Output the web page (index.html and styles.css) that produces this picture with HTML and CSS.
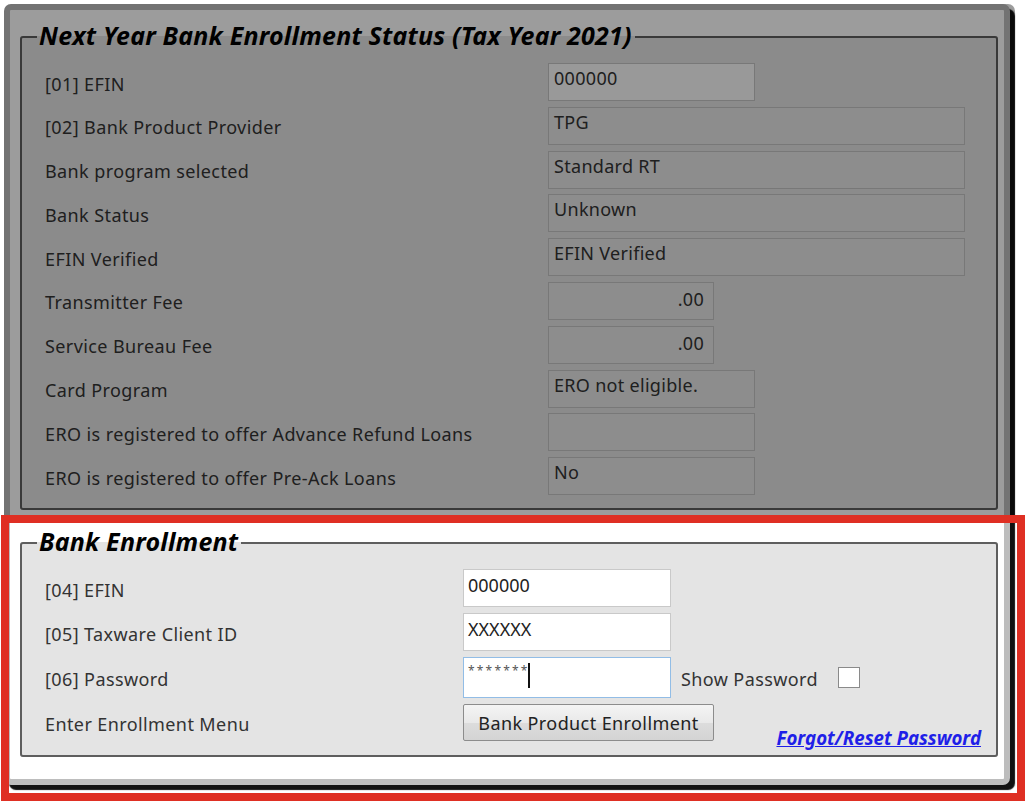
FILE: index.html
```html
<!DOCTYPE html>
<html lang="en">
<head>
    <meta charset="UTF-8">
    <title>Bank Enrollment</title>
    <link rel="stylesheet" href="styles.css">
</head>
<body>

    <div class="window">
        <!-- dimmed part of the dialog -->
        <div class="dim"></div>

        <fieldset class="group status">
            <legend>Next Year Bank Enrollment Status (Tax Year 2021)</legend>
            <div class="grid">
                <div class="label">[01] EFIN</div>
                <div class="box w-md light">000000</div>

                <div class="label">[02] Bank Product Provider</div>
                <div class="box w-lg">TPG</div>

                <div class="label">Bank program selected</div>
                <div class="box w-lg">Standard RT</div>

                <div class="label">Bank Status</div>
                <div class="box w-lg">Unknown</div>

                <div class="label">EFIN Verified</div>
                <div class="box w-lg">EFIN Verified</div>

                <div class="label">Transmitter Fee</div>
                <div class="box w-sm num">.00</div>

                <div class="label">Service Bureau Fee</div>
                <div class="box w-sm num">.00</div>

                <div class="label">Card Program</div>
                <div class="box w-md">ERO not eligible.</div>

                <div class="label">ERO is registered to offer Advance Refund Loans</div>
                <div class="box w-md"></div>

                <div class="label">ERO is registered to offer Pre-Ack Loans</div>
                <div class="box w-md">No</div>
            </div>
        </fieldset>

        <fieldset class="group enroll">
            <legend>Bank Enrollment</legend>
            <div class="row">
                <div class="label">[04] EFIN</div>
                <div class="field">000000</div>
            </div>
            <div class="row">
                <div class="label">[05] Taxware Client ID</div>
                <div class="field">XXXXXX</div>
            </div>
            <div class="row">
                <div class="label">[06] Password</div>
                <div class="field focus"><span class="stars">*******</span><span class="caret"></span></div>
                <div class="show-label">Show Password</div>
                <span class="check"></span>
            </div>
            <div class="row">
                <div class="label">Enter Enrollment Menu</div>
                <button class="btn">Bank Product Enrollment</button>
                <a href="#" class="reset">Forgot/Reset Password</a>
            </div>
        </fieldset>
    </div>

    <!-- highlight box -->
    <div class="highlight"></div>

</body>
</html>
```

FILE: styles.css
```css
html, body {
    margin: 0;
    padding: 0;
    width: 1030px;
    height: 801px;
    overflow: hidden;
    background: #ffffff;
    font-family: "Noto Sans", "Liberation Sans", sans-serif;
    color: #333;
}
.window {
    position: relative;
    box-sizing: border-box;
    margin: 4px 0 0 4px;
    width: 1006px;
    height: 781px;
    padding: 0 6px 0 10px;
    background: #fff;
    border: 6px solid #bdbdbd;
    border-radius: 7px;
    box-shadow: 5px 5px 1px #111;
}
.dim {
    position: absolute;
    top: -6px;
    left: -6px;
    right: -11px;
    height: 511px;
    background: rgba(0, 0, 0, 0.39);
    border-radius: 7px 7px 0 0;
    z-index: 5;
}
.group {
    margin: 0;
    border: 2px solid #5e5e5e;
    border-radius: 3px;
    background: #e4e4e4;
    padding: 0 15px 0 23px;
}
.group legend {
    margin-left: -8px;
    padding: 0 3px 4px 2px;
    font-size: 25px;
    line-height: 30px;
    letter-spacing: 0.2px;
    font-weight: bold;
    font-style: italic;
    color: #000;
}
.status {
    margin-top: 10px;
    padding-top: 9px;
    padding-bottom: 13px;
}
.grid {
    display: grid;
    grid-template-columns: 503px auto;
    grid-auto-rows: 38px;
    row-gap: 5.8px;
    align-items: center;
}
.label {
    font-size: 18px;
    letter-spacing: 0.4px;
    padding-top: 3px;
}
.box {
    box-sizing: border-box;
    height: 38px;
    padding: 2px 5px;
    font-size: 18px;
    letter-spacing: 0.3px;
    line-height: 24px;
    background: #e6e6e6;
    border: 1px solid #c4c4c4;
}
.box.light {
    background: #fafafa;
}
.box.num {
    text-align: right;
    padding-right: 9px;
    padding-top: 4px;
}
.w-sm { width: 166px; }
.w-md { width: 207px; }
.w-lg { width: 417px; }

.enroll {
    margin-top: 16px;
    padding-top: 9px;
    padding-bottom: 14px;
}
.row {
    display: flex;
    align-items: center;
    margin-bottom: 6px;
}
.row:last-child {
    margin-bottom: 0;
}
.row .label {
    width: 418px;
    flex: none;
}
.field {
    box-sizing: border-box;
    width: 208px;
    height: 38px;
    padding: 3px 4px;
    font-size: 18px;
    line-height: 24px;
    background: #fff;
    border: 1.5px solid #c9c9c9;
    color: #222;
}
.field.focus {
    height: 41px;
    border-color: #92bde6;
    display: flex;
    align-items: flex-start;
}
.stars {
    font-size: 12px;
    line-height: 16px;
    letter-spacing: 2.2px;
    color: #555;
    padding-top: 2px;
    margin-right: -2px;
}
.caret {
    display: inline-block;
    width: 2px;
    height: 25px;
    margin-top: 2px;
    background: #111;
}
.show-label {
    margin-left: 10px;
    width: 157px;
    font-size: 18px;
    letter-spacing: 0.4px;
    padding-top: 3px;
}
.check {
    width: 20px;
    height: 19px;
    background: #fff;
    border: 1px solid #8a8a8a;
}
.btn {
    box-sizing: border-box;
    width: 251px;
    height: 37px;
    font-family: "Noto Sans", "Liberation Sans", sans-serif;
    font-size: 18px;
    letter-spacing: 0.4px;
    color: #222;
    border: 1px solid #8c8c8c;
    border-radius: 2px;
    background: linear-gradient(#f4f4f4, #e9e9e9 50%, #dcdcdc 51%, #d4d4d4);
}
.reset {
    margin-left: auto;
    align-self: flex-end;
    margin-bottom: -9px;
    font-size: 18.7px;
    font-weight: bold;
    font-style: italic;
    color: #1f1fe8;
    text-decoration: underline;
}
.highlight {
    position: absolute;
    left: 1px;
    top: 515px;
    width: 1024px;
    height: 286px;
    box-sizing: border-box;
    border: 8px solid #df2f23;
    z-index: 10;
}
```
